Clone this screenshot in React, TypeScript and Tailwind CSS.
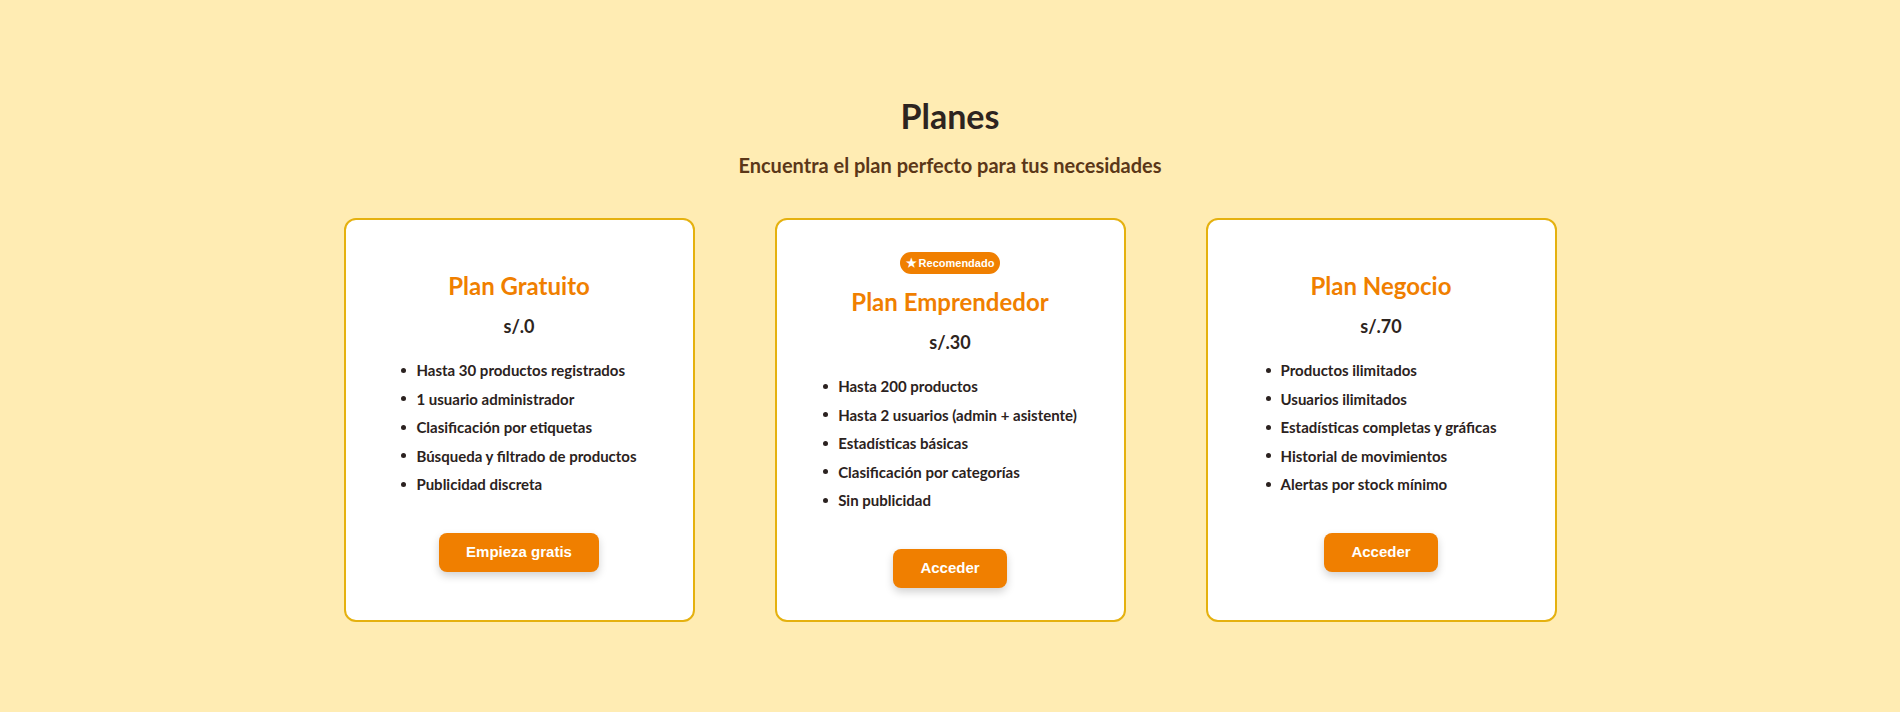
const plans = [
  {
    name: "Plan Gratuito",
    price: "s/.0",
    cta: "Empieza gratis",
    featured: false,
    features: [
      "Hasta 30 productos registrados",
      "1 usuario administrador",
      "Clasificación por etiquetas",
      "Búsqueda y filtrado de productos",
      "Publicidad discreta",
    ],
  },
  {
    name: "Plan Emprendedor",
    price: "s/.30",
    cta: "Acceder",
    featured: true,
    features: [
      "Hasta 200 productos",
      "Hasta 2 usuarios (admin + asistente)",
      "Estadísticas básicas",
      "Clasificación por categorías",
      "Sin publicidad",
    ],
  },
  {
    name: "Plan Negocio",
    price: "s/.70",
    cta: "Acceder",
    featured: false,
    features: [
      "Productos ilimitados",
      "Usuarios ilimitados",
      "Estadísticas completas y gráficas",
      "Historial de movimientos",
      "Alertas por stock mínimo",
    ],
  },
];

export default function App() {
  return (
    <section className="min-h-screen bg-[#ffecb3] pt-[94px] pb-[90px] font-['Lato',sans-serif] text-[#2b2220]">
      <h2 className="text-center text-[34px] font-bold leading-[44px] text-[#2d2420]">Planes</h2>
      <p className="mt-[14px] text-center text-[20px] font-bold leading-[26px] text-[#5b3718]">
        Encuentra el plan perfecto para tus necesidades
      </p>

      <div className="mt-[40px] flex justify-center gap-[80px]">
        {plans.map((p) => (
          <div
            key={p.name}
            className="flex w-[351px] flex-col items-center rounded-[12px] border-2 border-[#e5b10f] bg-white px-8 pt-8 pb-8 text-center"
          >
            {p.featured ? (
              <span className="flex h-[22px] items-center gap-[2px] rounded-full bg-[#f07f00] px-[6px] font-['Liberation_Sans',Arial,sans-serif] text-[11px] font-bold text-white">
                <span className="text-[12px]">★</span>
                Recomendado
              </span>
            ) : null}
            <h3
              className={`${p.featured ? "mt-[12px]" : "mt-[18px]"} text-[24px] font-bold leading-[32px] text-[#f07f00]`}
            >
              {p.name}
            </h3>
            <div className="mt-[11px] text-[18px] font-bold leading-[26px] text-[#2d2420]">{p.price}</div>

            <ul className="mt-[17px] w-fit text-left">
              {p.features.map((f) => (
                <li key={f} className="flex items-center gap-[10px] text-[15px] font-bold leading-[28.5px]">
                  <span className="h-[5px] w-[5px] flex-shrink-0 rounded-full bg-[#2b2220]" />
                  {f}
                </li>
              ))}
            </ul>

            <button className="mt-[34px] h-[39px] cursor-pointer rounded-[8px] bg-[#f07f00] px-[27px] font-['Liberation_Sans',Arial,sans-serif] text-[15px] font-bold text-white shadow-[0_4px_8px_rgba(0,0,0,0.18)]">
              {p.cta}
            </button>
          </div>
        ))}
      </div>
    </section>
  );
}
